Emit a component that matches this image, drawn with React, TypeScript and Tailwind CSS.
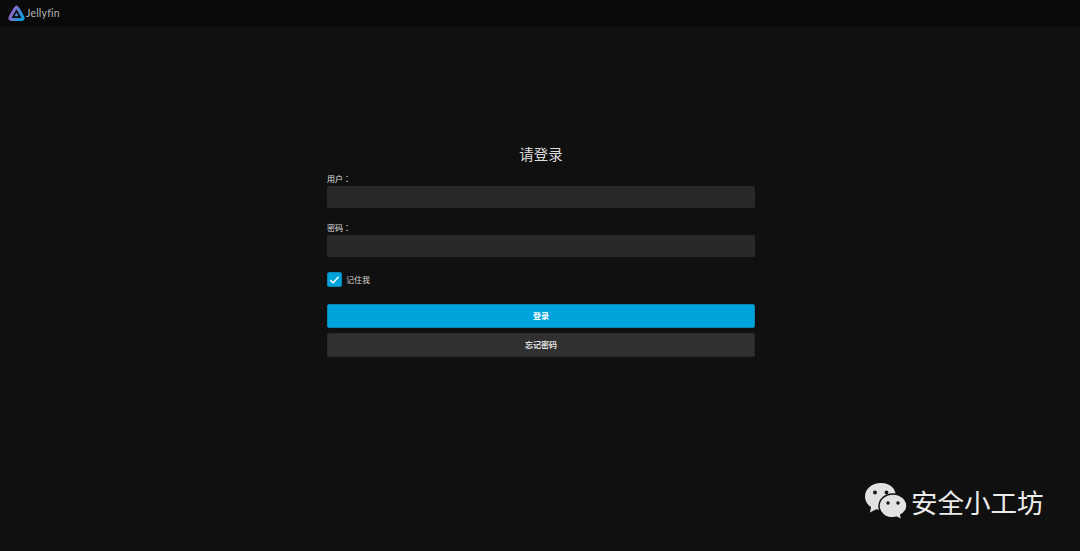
import React from 'react';

const JellyfinLogo = () => (
  <svg width="17" height="17" viewBox="0 0 17 17" fill="none">
    <defs>
      <linearGradient id="jf" x1="1" y1="5" x2="16" y2="13" gradientUnits="userSpaceOnUse">
        <stop offset="0" stopColor="#aa5cc3" />
        <stop offset="1" stopColor="#00a4dc" />
      </linearGradient>
    </defs>
    <path
      d="M8.500 2.200C7.700 2.200 3.300 9.800 2.200 12.300 1.600 13.700 2.300 14.500 3.600 14.500h9.800c1.300 0 2-.8 1.400-2.200C13.700 9.800 9.300 2.200 8.500 2.200z"
      stroke="url(#jf)"
      strokeWidth="3.200"
      strokeLinejoin="round"
      fill="#0a0a0a"
    />
    <path
      fill="url(#jf)"
      d="M8.500 7.800c-.3 0-1.400 2.100-1.700 2.800-.2.400 0 .6.400.6h2.600c.4 0 .6-.2.400-.6-.3-.7-1.400-2.800-1.700-2.800z"
    />
  </svg>
);

const WeChatIcon = () => (
  <svg width="44" height="38" viewBox="0 0 44 38" className="block">
    <path
      fill="#e2e2e2"
      d="M17 1C7.800 1 1 7 1 14.500c0 4.400 2.400 8.100 6 10.500l-1 5.500 6.300-3.300c1.600.4 3.100.7 4.700.7 7.500 0 15-5 15-13C32 6.500 26 1 17 1z"
    />
    <circle cx="11" cy="10.500" r="1.900" fill="#161616" />
    <circle cx="22.500" cy="10.500" r="1.900" fill="#161616" />
    <path
      fill="#e2e2e2"
      stroke="#101010"
      strokeWidth="1.500"
      d="M29 12c-7.700 0-14 5.400-14 12s6.300 12 14 11.800c1.300 0 2.600-.2 3.800-.5L38 38l-1.200-5c3.600-2.200 6.200-5.300 6.200-9 0-6.600-6.300-12-14-12z"
    />
    <circle cx="24" cy="21" r="1.700" fill="#161616" />
    <circle cx="34" cy="21" r="1.700" fill="#161616" />
  </svg>
);

const cjk = "font-['Roboto','Noto_Sans_CJK_SC',sans-serif]";

const Field = ({ label }: { label: string }) => (
  <div className="mb-[15px]">
    <label className="mb-[2px] block font-['Noto_Sans_CJK_TC',sans-serif] text-[8px] leading-[10px] text-[#e0e0e0]">{label}</label>
    <div className="h-[22px] rounded-[2px] bg-[#292929]" />
  </div>
);

export default function App() {
  return (
    <div className={`relative h-[551px] overflow-hidden bg-[#101010] text-white ${cjk}`}>
      <header className="flex h-[27px] items-center bg-[#0a0a0a] pl-[8px]">
        <JellyfinLogo />
        <span className="ml-[1px] font-['Lato',sans-serif] text-[10.500px] text-[#b4b4b4] tracking-[0.2px]">Jellyfin</span>
      </header>

      <main className="ml-[327px] w-[428px] pt-[118px]">
        <h1 className="mb-[7px] text-center text-[14.500px] leading-[22px] font-normal text-[#dcdcdc]">请登录</h1>
        <Field label="用户：" />
        <Field label="密码：" />
        <div className="flex h-[16px] items-start gap-[4px]">
          <div className="flex h-[15px] w-[15px] items-center justify-center rounded-[2px] border border-[#0a86b3] bg-[#00a4dc]">
            <svg width="11" height="11" viewBox="0 0 24 24" fill="none" stroke="#fff" strokeWidth="3">
              <path d="M3 13l6 6L21 6" />
            </svg>
          </div>
          <span className="pt-[1px] text-[8px] leading-[16px] text-[#d4d4d4]">记住我</span>
        </div>
        <button className="mt-[16px] block h-[24px] w-full rounded-[2px] border border-[#0a86b3] bg-[#00a4dc] pt-[1px] text-[8px] font-bold text-white">
          登录
        </button>
        <button className="mt-[5px] block h-[24px] w-full rounded-[2px] border border-[#2a2a2a] bg-[#303030] pt-[1px] text-[8px] font-bold text-[#e0e0e0]">
          忘记密码
        </button>
      </main>

      <div className="absolute left-[864px] top-[482px] flex items-start gap-[3px]">
        <WeChatIcon />
        <span className="pt-[3px] text-[26.500px] leading-[38px] text-[#ececec]">安全小工坊</span>
      </div>
    </div>
  );
}
